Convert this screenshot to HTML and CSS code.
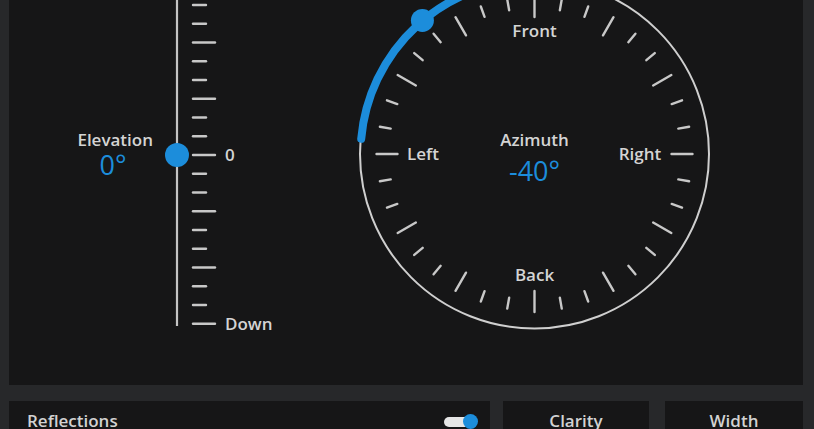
FILE: index.html
```html
<!DOCTYPE html>
<html lang="en">
<head>
    <meta charset="UTF-8">
    <title>Spatial Panner</title>
    <link rel="stylesheet" href="styles.css">
</head>
<body>

<div class="panner">
    <!-- Elevation slider -->
    <svg class="elevation" width="300" height="385" viewBox="0 0 300 385">
        <line class="rail" x1="168" y1="0" x2="168" y2="326"/>
        <g class="ticks">
            <line x1="184" y1="5" x2="197" y2="5"/>
            <line x1="184" y1="23.75" x2="197" y2="23.75"/>
            <line class="major" x1="184" y1="42.5" x2="206" y2="42.5"/>
            <line x1="184" y1="61.25" x2="197" y2="61.25"/>
            <line x1="184" y1="80" x2="197" y2="80"/>
            <line class="major" x1="184" y1="98.75" x2="206" y2="98.75"/>
            <line x1="184" y1="117.5" x2="197" y2="117.5"/>
            <line x1="184" y1="136.25" x2="197" y2="136.25"/>
            <line class="major" x1="184" y1="155" x2="206" y2="155"/>
            <line x1="184" y1="173.75" x2="197" y2="173.75"/>
            <line x1="184" y1="192.5" x2="197" y2="192.5"/>
            <line class="major" x1="184" y1="211.25" x2="206" y2="211.25"/>
            <line x1="184" y1="230" x2="197" y2="230"/>
            <line x1="184" y1="248.75" x2="197" y2="248.75"/>
            <line class="major" x1="184" y1="267.5" x2="206" y2="267.5"/>
            <line x1="184" y1="286.25" x2="197" y2="286.25"/>
            <line x1="184" y1="305" x2="197" y2="305"/>
            <line class="major" x1="184" y1="323.75" x2="206" y2="323.75"/>
        </g>
        <circle class="knob" cx="168" cy="155" r="12"/>
        <text class="label" x="144" y="146" text-anchor="end">Elevation</text>
        <text class="value" x="104" y="175" text-anchor="middle">0°</text>
        <text class="label" x="216" y="161">0</text>
        <text class="label" x="216" y="330">Down</text>
    </svg>

    <!-- Azimuth dial -->
    <svg class="dial" width="380" height="385" viewBox="0 0 380 385">
        <g transform="translate(190.5 154)">
            <circle class="ring" r="174.5"/>
            <g class="ticks">
                <line class="major" y1="-158" y2="-137"/>
                <line y1="-157" y2="-146" transform="rotate(10)"/>
                <line y1="-157" y2="-146" transform="rotate(20)"/>
                <line class="major" y1="-158" y2="-137" transform="rotate(30)"/>
                <line y1="-157" y2="-146" transform="rotate(40)"/>
                <line y1="-157" y2="-146" transform="rotate(50)"/>
                <line class="major" y1="-158" y2="-137" transform="rotate(60)"/>
                <line y1="-157" y2="-146" transform="rotate(70)"/>
                <line y1="-157" y2="-146" transform="rotate(80)"/>
                <line class="major" y1="-158" y2="-137" transform="rotate(90)"/>
                <line y1="-157" y2="-146" transform="rotate(100)"/>
                <line y1="-157" y2="-146" transform="rotate(110)"/>
                <line class="major" y1="-158" y2="-137" transform="rotate(120)"/>
                <line y1="-157" y2="-146" transform="rotate(130)"/>
                <line y1="-157" y2="-146" transform="rotate(140)"/>
                <line class="major" y1="-158" y2="-137" transform="rotate(150)"/>
                <line y1="-157" y2="-146" transform="rotate(160)"/>
                <line y1="-157" y2="-146" transform="rotate(170)"/>
                <line class="major" y1="-158" y2="-137" transform="rotate(180)"/>
                <line y1="-157" y2="-146" transform="rotate(190)"/>
                <line y1="-157" y2="-146" transform="rotate(200)"/>
                <line class="major" y1="-158" y2="-137" transform="rotate(210)"/>
                <line y1="-157" y2="-146" transform="rotate(220)"/>
                <line y1="-157" y2="-146" transform="rotate(230)"/>
                <line class="major" y1="-158" y2="-137" transform="rotate(240)"/>
                <line y1="-157" y2="-146" transform="rotate(250)"/>
                <line y1="-157" y2="-146" transform="rotate(260)"/>
                <line class="major" y1="-158" y2="-137" transform="rotate(270)"/>
                <line y1="-157" y2="-146" transform="rotate(280)"/>
                <line y1="-157" y2="-146" transform="rotate(290)"/>
                <line class="major" y1="-158" y2="-137" transform="rotate(300)"/>
                <line y1="-157" y2="-146" transform="rotate(310)"/>
                <line y1="-157" y2="-146" transform="rotate(320)"/>
                <line class="major" y1="-158" y2="-137" transform="rotate(330)"/>
                <line y1="-157" y2="-146" transform="rotate(340)"/>
                <line y1="-157" y2="-146" transform="rotate(350)"/>
            </g>
            <!-- arc from -85deg (near Left) to 0deg (Front) -->
            <path class="arc" d="M -173.3 -15.2 A 174 174 0 0 1 0 -174"/>
            <circle class="knob" cx="-112.1" cy="-133.6" r="11.5"/>
            <text class="label" y="-117" text-anchor="middle">Front</text>
            <text class="label" x="-111.5" y="6" text-anchor="middle">Left</text>
            <text class="label" x="105.5" y="6" text-anchor="middle">Right</text>
            <text class="label" y="127" text-anchor="middle">Back</text>
            <text class="label" y="-8" text-anchor="middle">Azimuth</text>
            <text class="value" y="27" text-anchor="middle">-40°</text>
        </g>
    </svg>
</div>

<div class="controls">
    <div class="card reflections">
        <span>Reflections</span>
        <span class="toggle"><span class="toggle-dot"></span></span>
    </div>
    <div class="card clarity">Clarity</div>
    <div class="card width">Width</div>
</div>

</body>
</html>
```

FILE: styles.css
```css
body {
    margin: 0;
    padding: 0 11px 0 9px;
    background-color: #27282a;
    font-family: "Open Sans", Arial, sans-serif;
    color: #d2d2d2;
    overflow: hidden;
}

.panner {
    display: flex;
    gap: 35px;
    height: 385px;
    background-color: #161617;
}

.elevation, .dial {
    display: block;
    flex: none;
}

.rail {
    stroke: #c4c4c4;
    stroke-width: 2.2;
}
.ticks line {
    stroke: #c8c8c8;
    stroke-width: 2.4;
    stroke-linecap: round;
}
.ring {
    fill: none;
    stroke: #cfcfcf;
    stroke-width: 2;
}
.arc {
    fill: none;
    stroke: #1c8ddb;
    stroke-width: 8;
    stroke-linecap: round;
}
.knob {
    fill: #1c8ddb;
}

.label {
    fill: #d4d4d4;
    font-size: 17px;
    font-weight: 600;
}
.value {
    fill: #1c8ddb;
    font-size: 27px;
    font-weight: 400;
}

.controls {
    display: flex;
    margin-top: 16px;
}
.card {
    height: 60px;
    box-sizing: border-box;
    background-color: #161617;
    font-size: 17px;
    font-weight: 600;
    padding-top: 8px;
}
.reflections {
    width: 481px;
    display: flex;
    justify-content: space-between;
    align-items: flex-start;
    padding-left: 18px;
    padding-right: 12px;
}
.clarity {
    width: 146px;
    margin-left: 13px;
    text-align: center;
}
.width {
    width: 138px;
    margin-left: 16px;
    text-align: center;
}

/* toggle: white pill with blue dot */
.toggle {
    display: flex;
    align-items: center;
    width: 34px;
    height: 15px;
    margin-top: 5px;
    position: relative;
}
.toggle::before {
    content: "";
    width: 26px;
    height: 10px;
    border-radius: 5px;
    background-color: #e6e6e6;
}
.toggle-dot {
    position: absolute;
    right: 0;
    top: 0;
    width: 15px;
    height: 15px;
    border-radius: 50%;
    background-color: #1c8ddb;
}
```
